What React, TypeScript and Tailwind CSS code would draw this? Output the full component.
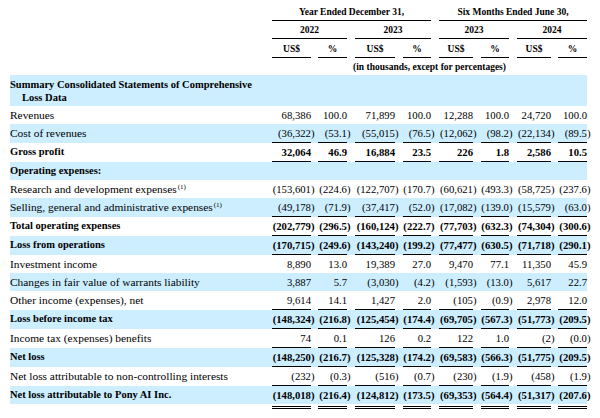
import React from "react";

type Row = {
  label: string;
  bold?: boolean;
  sup?: boolean;
  vals?: string[];
  line?: "single" | "double";
};

const rows: Row[] = [
  { label: "Revenues", vals: ["68,386", "100.0", "71,899", "100.0", "12,288", "100.0", "24,720", "100.0"] },
  { label: "Cost of revenues", vals: ["(36,322)", "(53.1)", "(55,015)", "(76.5)", "(12,062)", "(98.2)", "(22,134)", "(89.5)"], line: "single" },
  { label: "Gross profit", bold: true, vals: ["32,064", "46.9", "16,884", "23.5", "226", "1.8", "2,586", "10.5"], line: "single" },
  { label: "Operating expenses:", bold: true },
  { label: "Research and development expenses", sup: true, vals: ["(153,601)", "(224.6)", "(122,707)", "(170.7)", "(60,621)", "(493.3)", "(58,725)", "(237.6)"] },
  { label: "Selling, general and administrative expenses", sup: true, vals: ["(49,178)", "(71.9)", "(37,417)", "(52.0)", "(17,082)", "(139.0)", "(15,579)", "(63.0)"], line: "single" },
  { label: "Total operating expenses", bold: true, vals: ["(202,779)", "(296.5)", "(160,124)", "(222.7)", "(77,703)", "(632.3)", "(74,304)", "(300.6)"], line: "single" },
  { label: "Loss from operations", bold: true, vals: ["(170,715)", "(249.6)", "(143,240)", "(199.2)", "(77,477)", "(630.5)", "(71,718)", "(290.1)"], line: "single" },
  { label: "Investment income", vals: ["8,890", "13.0", "19,389", "27.0", "9,470", "77.1", "11,350", "45.9"] },
  { label: "Changes in fair value of warrants liability", vals: ["3,887", "5.7", "(3,030)", "(4.2)", "(1,593)", "(13.0)", "5,617", "22.7"] },
  { label: "Other income (expenses), net", vals: ["9,614", "14.1", "1,427", "2.0", "(105)", "(0.9)", "2,978", "12.0"], line: "single" },
  { label: "Loss before income tax", bold: true, vals: ["(148,324)", "(216.8)", "(125,454)", "(174.4)", "(69,705)", "(567.3)", "(51,773)", "(209.5)"], line: "single" },
  { label: "Income tax (expenses) benefits", vals: ["74", "0.1", "126", "0.2", "122", "1.0", "(2)", "(0.0)"], line: "single" },
  { label: "Net loss", bold: true, vals: ["(148,250)", "(216.7)", "(125,328)", "(174.2)", "(69,583)", "(566.3)", "(51,775)", "(209.5)"], line: "single" },
  { label: "Net loss attributable to non-controlling interests", vals: ["(232)", "(0.3)", "(516)", "(0.7)", "(230)", "(1.9)", "(458)", "(1.9)"], line: "single" },
  { label: "Net loss attributable to Pony AI Inc.", bold: true, vals: ["(148,018)", "(216.4)", "(124,812)", "(173.5)", "(69,353)", "(564.4)", "(51,317)", "(207.6)"], line: "double" },
];

const cellOuter = [
  "pl-[8px] w-[47px]",
  "pl-[7px] w-[36px]",
  "pl-[8px] w-[48px]",
  "pl-[8px] w-[36px]",
  "pl-[8px] w-[42px]",
  "pl-[8px] w-[36px]",
  "pl-[8px] w-[42px]",
  "pl-[7px] w-[36px]",
];

function Num({ v }: { v: string }) {
  if (v.endsWith(")")) {
    return (
      <span className="whitespace-nowrap">
        {v.slice(0, -1)}
        <span className="-mr-[3.5px]">)</span>
      </span>
    );
  }
  return <span className="whitespace-nowrap">{v}</span>;
}

export default function App() {
  return (
    <div
      className="w-[600px] h-[418px] bg-white text-black overflow-hidden pl-[10px]"
      style={{ fontFamily: '"Liberation Serif", "Times New Roman", serif' }}
    >
      <div className="w-[577px]">
        {/* Header row 1 */}
        <div className="flex h-[21px] text-[9.5px] font-bold leading-[12px]">
          <div className="w-[262px]" />
          <div className="w-[159px] border-b border-black flex items-end justify-center pb-[2px] whitespace-nowrap">
            Year Ended December 31,
          </div>
          <div className="w-[8px]" />
          <div className="w-[148px] border-b border-black flex items-end justify-center pb-[2px] whitespace-nowrap">
            Six Months Ended June 30,
          </div>
        </div>
        {/* Header row 2 */}
        <div className="flex h-[18px] text-[9.5px] font-bold leading-[12px]">
          <div className="w-[262px]" />
          <div className="w-[75px] border-b border-black flex items-end justify-center pb-[2px]">2022</div>
          <div className="w-[8px]" />
          <div className="w-[76px] border-b border-black flex items-end justify-center pb-[2px]">2023</div>
          <div className="w-[8px]" />
          <div className="w-[70px] border-b border-black flex items-end justify-center pb-[2px]">2023</div>
          <div className="w-[8px]" />
          <div className="w-[70px] border-b border-black flex items-end justify-center pb-[2px]">2024</div>
        </div>
        {/* Header row 3 */}
        <div className="flex h-[19px] text-[9.5px] font-bold leading-[12px]">
          <div className="w-[254px]" />
          {cellOuter.map((c, i) => (
            <div key={i} className={`${c} h-full`}>
              <div className="h-full border-b border-black flex items-end justify-center pb-[2px]">
                {i % 2 === 0 ? "US$" : "%"}
              </div>
            </div>
          ))}
        </div>
        {/* Header row 4 */}
        <div className="flex h-[17px] text-[9.5px] font-bold leading-[12px]">
          <div className="w-[262px]" />
          <div className="w-[315px] flex justify-center pt-[3px] whitespace-nowrap">
            (in thousands, except for percentages)
          </div>
        </div>

        {/* Summary header */}
        <div className="bg-[#cceeff] h-[31px] pt-[3px] text-[10.5px] font-bold leading-[13px]">
          <div className="w-[254px] pl-[12px] -indent-[12px]">
            Summary Consolidated Statements of Comprehensive Loss Data
          </div>
        </div>

        {rows.map((r, idx) => {
          const blue = idx % 2 === 1;
          const hasLine = r.line === "single";
          return (
            <div
              key={idx}
              className={`flex ${hasLine ? "h-[19px]" : "h-[18px]"} ${blue ? "bg-[#cceeff]" : "bg-white"}`}
            >
              <div
                className={`w-[254px] whitespace-nowrap leading-[18px] ${
                  r.bold ? "font-bold text-[10.5px]" : "text-[11.4px]"
                }`}
              >
                {r.label}
                {r.sup && (
                  <sup className="text-[7px] relative -top-[4.5px] ml-[1px] align-baseline">(1)</sup>
                )}
              </div>
              {cellOuter.map((c, i) => (
                <div key={i} className={`${c} h-full`}>
                  <div
                    className={`h-full flex justify-end leading-[18px] text-[10.7px] ${
                      r.bold ? "font-bold" : ""
                    } ${hasLine ? "border-b border-black" : ""}`}
                  >
                    {r.vals ? <Num v={r.vals[i]} /> : null}
                  </div>
                </div>
              ))}
            </div>
          );
        })}
        {/* double underline */}
        <div className="flex h-[8px]">
          <div className="w-[254px]" />
          {cellOuter.map((c, i) => (
            <div key={i} className={`${c} pt-[2px]`}>
              <div className="border-t-[3px] border-double border-black" />
            </div>
          ))}
        </div>
      </div>
    </div>
  );
}
